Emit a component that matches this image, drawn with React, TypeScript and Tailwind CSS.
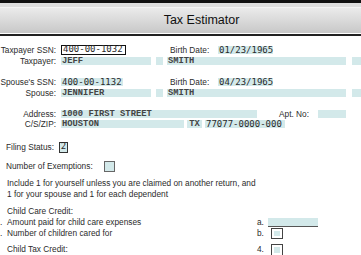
const sans = "font-['Liberation_Sans',Arial,sans-serif]";
const num = "font-['DejaVu_Sans_Mono',monospace] text-[9px] text-[#2a2a2a]";
const name = "font-['Liberation_Mono',monospace] text-[8.8px] font-bold text-[#444]";
const teal = "bg-[#d3e9ea]";
const fill = `${teal} h-[8px] flex items-center px-[1px] leading-none`;

function Label({ children }: { children: React.ReactNode }) {
  return <span className="w-[61px] shrink-0 text-right pr-[5px]">{children}</span>;
}

export default function App() {
  return (
    <div className={`w-[361px] h-[255px] overflow-hidden bg-white ${sans} text-[8.3px] text-[#2b2b2b]`}>
      <div className="w-[403px]">
        {/* header */}
        <div className="h-[3px] bg-[#111]" />
        <div className="h-[4px] bg-[#dedede]" />
        <div className="h-[1px] bg-[#f4f4f4]" />
        <div className="h-[25px] bg-gradient-to-b from-[#ebebeb] to-[#c8c8c8] flex items-center justify-center">
          <span className="text-[12.5px] text-[#111] leading-none">Tax Estimator</span>
        </div>
        <div className="h-[1px] bg-white" />
        <div className="h-[2px] bg-[#222]" />

        {/* taxpayer */}
        <div className="mt-[9px] flex items-center h-[10px]">
          <Label>Taxpayer SSN:</Label>
          <div className={`w-[65px] h-[10px] border border-[#111] bg-white flex items-center px-[1px] ${num}`}>400-00-1032</div>
          <span className="ml-[44px] w-[48px]">Birth Date:</span>
          <div className={`w-[55px] ${fill} ${num}`}>01/23/1965</div>
        </div>
        <div className="mt-[1px] flex items-center h-[10px]">
          <Label>Taxpayer:</Label>
          <div className={`w-[90px] ${fill} ${name}`}>JEFF</div>
          <div className={`ml-[5px] w-[7px] ${fill}`} />
          <div className={`ml-[4px] w-[179px] ${fill} ${name}`}>SMITH</div>
          <div className={`ml-[6px] w-[40px] ${fill}`} />
        </div>

        {/* spouse */}
        <div className="mt-[11px] flex items-center h-[10px]">
          <Label>Spouse's SSN:</Label>
          <div className={`w-[62px] ${fill} ${num}`}>400-00-1132</div>
          <span className="ml-[47px] w-[48px]">Birth Date:</span>
          <div className={`w-[55px] ${fill} ${num}`}>04/23/1965</div>
        </div>
        <div className="mt-[1px] flex items-center h-[10px]">
          <Label>Spouse:</Label>
          <div className={`w-[90px] ${fill} ${name}`}>JENNIFER</div>
          <div className={`ml-[5px] w-[7px] ${fill}`} />
          <div className={`ml-[4px] w-[179px] ${fill} ${name}`}>SMITH</div>
          <div className={`ml-[6px] w-[40px] ${fill}`} />
        </div>

        {/* address */}
        <div className="mt-[11px] flex items-center h-[10px]">
          <Label>Address:</Label>
          <div className={`w-[196px] ${fill} ${name}`}>1000 FIRST STREET</div>
          <span className="ml-[22px] w-[39px]">Apt. No:</span>
          <div className={`w-[28px] ${fill}`} />
        </div>
        <div className="flex items-center h-[10px]">
          <Label>C/S/ZIP:</Label>
          <div className={`w-[123px] ${fill} ${name}`}>HOUSTON</div>
          <div className={`ml-[3px] w-[15px] ${fill} ${name} justify-center`}>TX</div>
          <div className={`ml-[3px] w-[80px] ${fill} ${num}`}>77077-0000-000</div>
        </div>

        {/* filing */}
        <div className="mt-[12px] flex items-center h-[12px] pl-[6px]">
          <span className="w-[53px]">Filing Status:</span>
          <div className={`w-[9px] h-[11px] border border-[#333] ${teal} flex items-center justify-center ${num}`}>2</div>
        </div>
        <div className="mt-[8px] flex items-center h-[11px] pl-[6px]">
          <span className="w-[98px]">Number of Exemptions:</span>
          <div className={`w-[11px] h-[11px] border border-[#666] ${teal}`} />
        </div>
        <div className="mt-[6px] pl-[7px] leading-[11px]">
          <p>Include 1 for yourself unless you are claimed on another return, and</p>
          <p>1 for your spouse and 1 for each dependent</p>
        </div>

        {/* child care */}
        <p className="mt-[6px] pl-[7px] leading-[11px]">Child Care Credit:</p>
        <div className="flex items-center h-[11px]">
          <span className="w-[257px] shrink-0"><span className="inline-block w-[7px]">.</span>Amount paid for child care expenses</span>
          <span className="w-[11px]">a.</span>
          <div className={`w-[50px] h-[9px] ${teal} border-b border-[#555]`} />
        </div>
        <div className="flex items-center h-[11px]">
          <span className="w-[257px] shrink-0"><span className="inline-block w-[7px]">.</span>Number of children cared for</span>
          <span className="w-[14px]">b.</span>
          <div className="w-[12px] h-[11px] border border-[#444] p-[2px]">
            <div className={`h-full ${teal}`} />
          </div>
        </div>
        <div className="mt-[5px] flex items-center h-[11px]">
          <span className="w-[257px] shrink-0 pl-[7px]">Child Tax Credit:</span>
          <span className="w-[14px]">4.</span>
          <div className="w-[12px] h-[12px] border border-[#444] p-[2px]">
            <div className={`h-full ${teal}`} />
          </div>
        </div>
      </div>
    </div>
  );
}
